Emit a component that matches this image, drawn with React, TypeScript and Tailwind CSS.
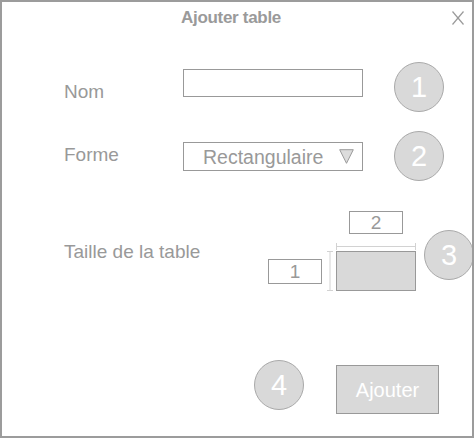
import React from "react";

const font = { fontFamily: '"Liberation Sans", Arial, sans-serif' };

function Badge({ n }: { n: string }) {
  return (
    <div className="w-[50px] h-[50px] shrink-0 rounded-full bg-[#d9d9d9] border border-[#a9a9a9] flex items-center justify-center text-white text-[29px] leading-none">
      {n}
    </div>
  );
}

export default function App() {
  return (
    <div className="bg-white w-[476px] h-[439px]" style={font}>
      <div className="w-[474px] h-[438px] border-2 border-[#9c9c9c] flex flex-col text-[#999] overflow-hidden">
        {/* header */}
        <div className="relative h-[60px] pt-[6px] pr-[12px] flex justify-center">
          <div className="text-[17px] leading-[20px] font-bold tracking-[-0.3px] text-[#9a9a9a]">
            Ajouter table
          </div>
          <svg
            className="absolute right-[8px] top-[9px]"
            width="12"
            height="14"
            viewBox="0 0 12 14"
          >
            <line x1="0.5" y1="0.5" x2="11.5" y2="13.5" stroke="#9a9a9a" strokeWidth="1.2" />
            <line x1="11.5" y1="0.5" x2="0.5" y2="13.5" stroke="#9a9a9a" strokeWidth="1.2" />
          </svg>
        </div>

        {/* row 1 */}
        <div className="flex items-start pl-[62px] h-[50px]">
          <div className="w-[119px] shrink-0 mt-[20px] text-[19px] leading-[20px]">Nom</div>
          <div className="w-[180px] shrink-0 h-[28px] mt-[7px] border border-[#999] bg-white" />
          <div className="ml-[31px] shrink-0">
            <Badge n="1" />
          </div>
        </div>

        {/* row 2 */}
        <div className="flex items-start pl-[62px] h-[50px] mt-[19px]">
          <div className="w-[119px] shrink-0 mt-[14px] text-[19px] leading-[20px]">Forme</div>
          <div className="w-[180px] shrink-0 h-[29px] mt-[11px] border border-[#999] flex items-center pl-[19px] pr-[8px]">
            <span className="text-[19.5px] leading-[20px]">Rectangulaire</span>
            <svg className="ml-auto" width="15" height="15" viewBox="0 0 15 15">
              <polygon points="0.7,0.7 14.3,0.7 7.5,14.3" fill="#dcdcdc" stroke="#9a9a9a" strokeWidth="1" />
            </svg>
          </div>
          <div className="ml-[31px] shrink-0">
            <Badge n="2" />
          </div>
        </div>

        {/* row 3 */}
        <div className="flex items-start pl-[62px] h-[80px] mt-[30px]">
          <div className="w-[204px] shrink-0 mt-[31px] text-[19px] leading-[20px]">Taille de la table</div>
          <div className="w-[54px] shrink-0 h-[25px] mt-[48px] border border-[#999] flex items-center justify-center text-[19px] leading-none">
            1
          </div>
          <svg className="ml-[5px] mt-[40px] shrink-0" width="6" height="40" viewBox="0 0 6 40">
            <line x1="3" y1="0.5" x2="3" y2="39.5" stroke="#d2d2d2" strokeWidth="1" />
            <line x1="0" y1="0.5" x2="6" y2="0.5" stroke="#d2d2d2" strokeWidth="1" />
            <line x1="0" y1="39.5" x2="6" y2="39.5" stroke="#d2d2d2" strokeWidth="1" />
          </svg>
          <div className="ml-[3px] w-[80px] shrink-0 flex flex-col">
            <div className="mx-auto w-[54px] h-[23px] border border-[#999] flex items-center justify-center text-[19px] leading-none">
              2
            </div>
            <svg className="mt-[9px]" width="80" height="7" viewBox="0 0 80 7">
              <line x1="0.5" y1="3.5" x2="79.5" y2="3.5" stroke="#d2d2d2" strokeWidth="1" />
              <line x1="0.5" y1="0" x2="0.5" y2="7" stroke="#d2d2d2" strokeWidth="1" />
              <line x1="79.5" y1="0" x2="79.5" y2="7" stroke="#d2d2d2" strokeWidth="1" />
            </svg>
            <div className="mt-[1px] w-[80px] h-[40px] bg-[#d9d9d9] border border-[#999]" />
          </div>
          <div className="ml-[8px] mt-[19px] shrink-0">
            <Badge n="3" />
          </div>
        </div>

        {/* row 4 */}
        <div className="flex items-start pl-[252px] mt-[69px]">
          <Badge n="4" />
          <div className="ml-[32px] mt-[5px] w-[103px] h-[49px] shrink-0 bg-[#d9d9d9] border border-[#999] flex items-center justify-center text-white text-[20px] leading-none">
            Ajouter
          </div>
        </div>
      </div>
    </div>
  );
}
